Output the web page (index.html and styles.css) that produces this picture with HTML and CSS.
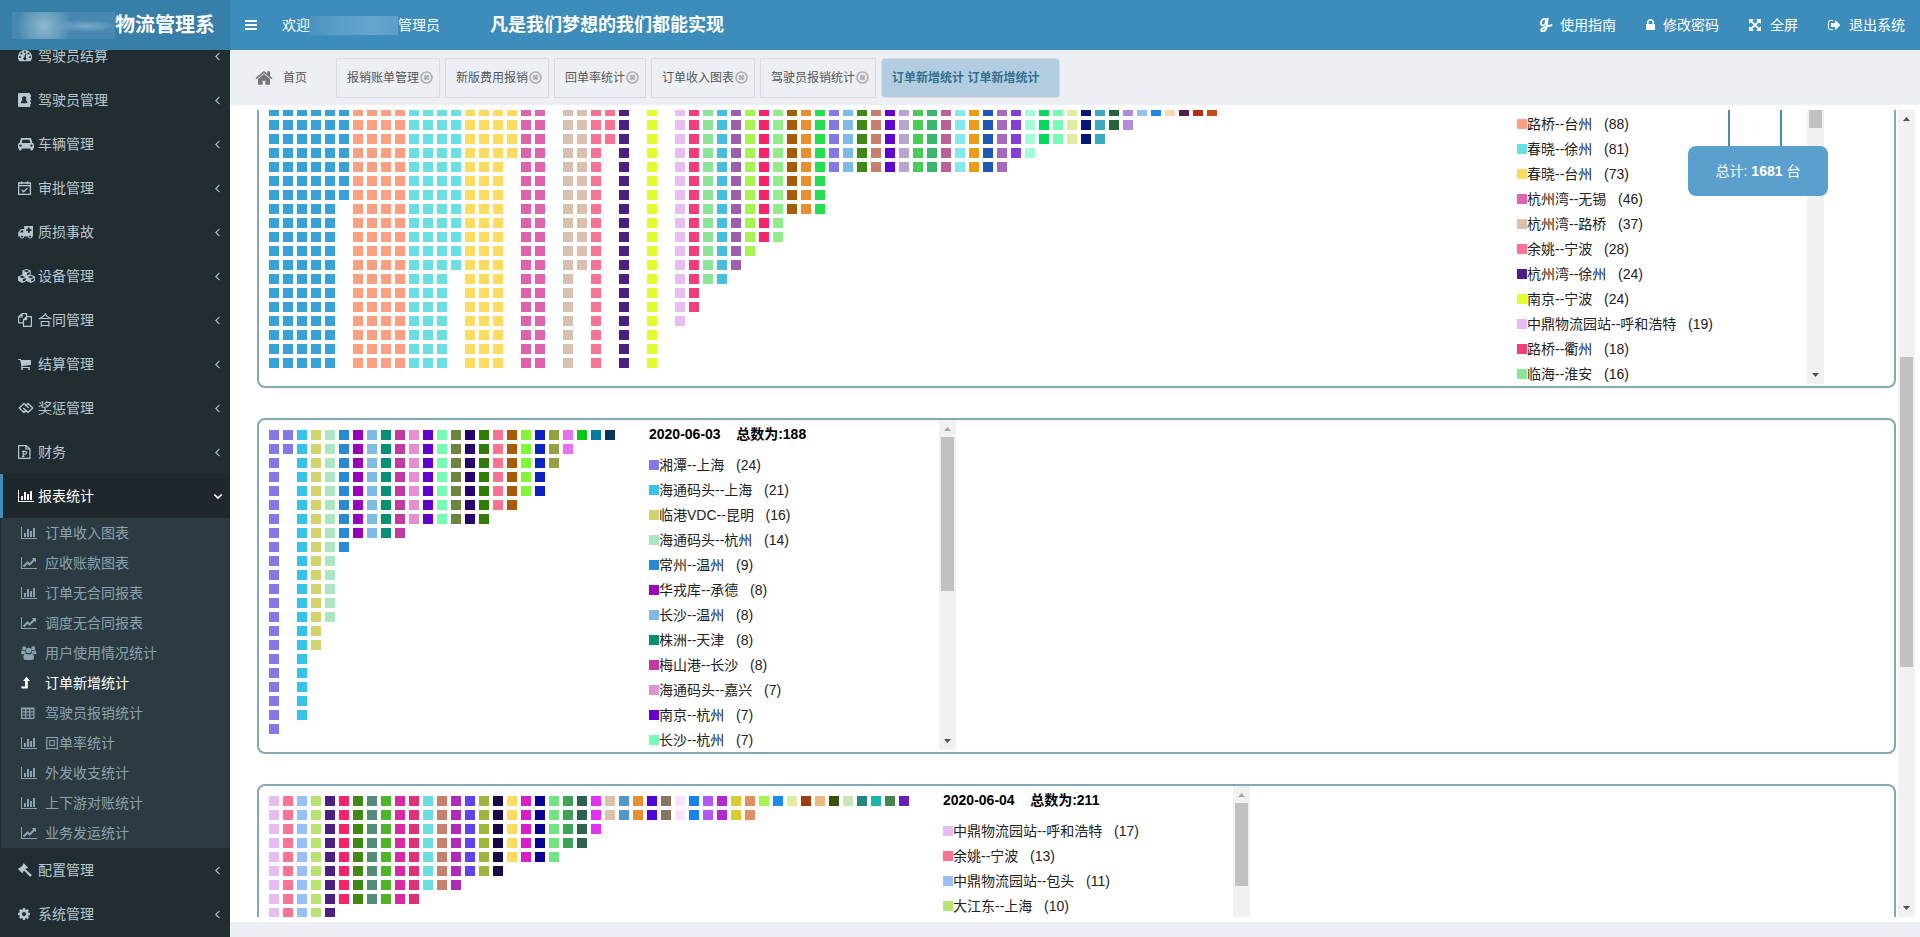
FILE: index.html
```html
<!DOCTYPE html>
<html lang="zh-CN">
<head>
<meta charset="utf-8">
<title>物流管理系统</title>
<link rel="stylesheet" href="styles.css">
</head>
<body>
<svg class="sprite" aria-hidden="true">
  <symbol id="i-bars" viewBox="128 0 1536 1792" preserveAspectRatio="xMinYMid"><path d="M1664 1344v128q0 26-19 45t-45 19h-1408q-26 0-45-19t-19-45v-128q0-26 19-45t45-19h1408q26 0 45 19t19 45zm0-512v128q0 26-19 45t-45 19h-1408q-26 0-45-19t-19-45v-128q0-26 19-45t45-19h1408q26 0 45 19t19 45zm0-512v128q0 26-19 45t-45 19h-1408q-26 0-45-19t-19-45v-128q0-26 19-45t45-19h1408q26 0 45 19t19 45z"/></symbol>
  <symbol id="i-left" viewBox="600 0 640 1792"><path d="M1203 544q0 13-10 23l-393 393 393 393q10 10 10 23t-10 23l-50 50q-10 10-23 10t-23-10l-466-466q-10-10-10-23t10-23l466-466q10-10 23-10t23 10l50 50q10 10 10 23z"/></symbol>
  <symbol id="i-down" viewBox="0 0 10 14"><path d="M1.300 5.500L5 9l3.700-3.500" fill="none" stroke="currentColor" stroke-width="1.700"/></symbol>
  <symbol id="i-bar" viewBox="0 0 2048 1792" preserveAspectRatio="xMinYMid"><path d="M640 896v512h-256v-512h256zm384-512v1024h-256v-1024h256zm1024 1152v128h-2048v-1536h128v1408h1920zm-640-896v768h-256v-768h256zm384-384v1152h-256v-1152h256z"/></symbol>
  <symbol id="i-line" viewBox="0 0 2048 1792" preserveAspectRatio="xMinYMid"><path d="M2048 1536v128h-2048v-1536h128v1408h1920zm-128-1248v435q0 21-19.500 29.500t-35.500-7.500l-121-121-633 633q-10 10-23 10t-23-10l-233-233-416 416-192-192 585-585q10-10 23-10t23 10l233 233 464-464-121-121q-16-16-7.500-35.500t29.500-19.500h435q14 0 23 9t9 23z"/></symbol>
  <symbol id="i-home" viewBox="64 128 1664 1536"><path d="M1472 992v480q0 26-19 45t-45 19h-384v-384h-256v384h-384q-26 0-45-19t-19-45v-480q0-1 .5-3t.5-3l575-474 575 474q1 2 1 6zm223-69l-62 74q-8 9-21 11h-3q-13 0-21-7l-692-577-692 577q-12 8-24 7-13-2-21-11l-62-74q-8-10-7-23.500t11-21.500l719-599q32-26 76-26t76 26l244 204v-195q0-14 9-23t23-9h192q14 0 23 9t9 23v408l219 182q10 8 11 21.500t-7 23.500z"/></symbol>
  <symbol id="i-lock" viewBox="320 0 1152 1792" preserveAspectRatio="xMinYMid"><path d="M640 768h512v-192q0-106-75-181t-181-75-181 75-75 181v192zm832 96v576q0 40-28 68t-68 28h-960q-40 0-68-28t-28-68v-576q0-40 28-68t68-28h32v-192q0-184 132-316t316-132 316 132 132 316v192h32q40 0 68 28t28 68z"/></symbol>
  <symbol id="i-cog" viewBox="128 0 1664 1792" preserveAspectRatio="xMinYMid"><path d="M1152 896q0-106-75-181t-181-75-181 75-75 181 75 181 181 75 181-75 75-181zm512-109v222q0 12-8 23t-20 13l-185 28q-19 54-39 91 35 50 107 138 10 12 10 25t-9 23q-27 37-99 108t-94 71q-12 0-26-9l-138-108q-44 23-91 38-16 136-29 186-7 28-36 28h-222q-14 0-24.500-8.500t-11.500-21.500l-28-184q-49-16-90-37l-141 107q-10 9-25 9-14 0-25-11-126-114-165-168-7-10-7-23 0-12 8-23 15-21 51-66.500t54-70.500q-27-50-41-99l-183-27q-13-2-21-12.500t-8-23.500v-222q0-12 8-23t19-13l186-28q14-46 39-92-40-57-107-138-10-12-10-24 0-10 9-23 26-36 98.500-107.500t94.500-71.500q13 0 26 10l138 107q44-23 91-38 16-136 29-186 7-28 36-28h222q14 0 24.500 8.500t11.500 21.500l28 184q49 16 90 37l142-107q9-9 24-9 13 0 25 10 129 119 165 170 7 8 7 22 0 12-8 23-15 21-51 66.500t-54 70.500q26 50 41 98l183 28q13 2 21 12.500t8 23.500z"/></symbol>
  <symbol id="i-cart" viewBox="64 0 1728 1792" preserveAspectRatio="xMinYMid"><path d="M704 1536q0 52-38 90t-90 38-90-38-38-90 38-90 90-38 90 38 38 90zm896 0q0 52-38 90t-90 38-90-38-38-90 38-90 90-38 90 38 38 90zm128-1088v512q0 24-16.500 42.500t-40.500 21.500l-1044 122q13 60 13 70 0 16-24 64h920q26 0 45 19t19 45-19 45-45 19h-1024q-26 0-45-19t-19-45q0-11 8-31.500t16-36 21.500-40 15.500-29.500l-177-823h-204q-26 0-45-19t-19-45 19-45 45-19h256q16 0 28.500 6.500t19.500 15.500 13 24.500 8 26 5.500 29.500 4.500 26h1201q26 0 45 19t19 45z"/></symbol>
  <symbol id="i-out" viewBox="64 0 1664 1792" preserveAspectRatio="xMinYMid"><path d="M704 1440q0 4 1 20t.5 26.500-3 23.500-10 19.500-20.500 6.500h-320q-119 0-203.500-84.500t-84.500-203.500v-704q0-119 84.500-203.500t203.500-84.500h320q13 0 22.500 9.500t9.500 22.500q0 4 1 20t.5 26.500-3 23.500-10 19.500-20.500 6.500h-320q-66 0-113 47t-47 113v704q0 66 47 113t113 47h312l11.500 1 11.500 3 8 5.500 7 9 2 13.500zm928-544q0 26-19 45l-544 544q-19 19-45 19t-45-19-19-45v-288h-448q-26 0-45-19t-19-45v-384q0-26 19-45t45-19h448v-288q0-26 19-45t45-19 45 19l544 544q19 19 19 45z"/></symbol>
  <symbol id="i-full" viewBox="128 0 1664 1792" preserveAspectRatio="xMinYMid"><path d="M1411 541l-355 355 355 355 144-144q29-31 70-14 39 17 39 59v448q0 26-19 45t-45 19h-448q-42 0-59-40-17-39 14-69l144-144-355-355-355 355 144 144q31 30 14 69-17 40-59 40h-448q-26 0-45-19t-19-45v-448q0-42 40-59 39-17 69 14l144 144 355-355-355-355-144 144q-19 19-45 19-12 0-24-5-40-17-40-59v-448q0-26 19-45t45-19h448q42 0 59 40 17 39-14 69l-144 144 355 355 355-355-144-144q-31-30-14-69 17-40 59-40h448q26 0 45 19t19 45v448q0 42-39 59-13 5-25 5-26 0-45-19z"/></symbol>
  <symbol id="i-glide" viewBox="0 0 14 14" preserveAspectRatio="xMinYMid"><path d="M6.800 1C3.800.200 1.500 3.200 2 5.800 2.400 8 5.200 8 6.300 5.500 7 3.800 7.300 2.500 6.800 1z" fill="none" stroke="currentColor" stroke-width="1.800"/><path d="M8.800.6C7.500 4 8 8 7 10.800 6.200 13.200 3.500 14 2.500 12.700 1.700 11.500 3.500 10 6 9.200 8 8.400 9.500 7.400 12.500 7.200" fill="none" stroke="currentColor" stroke-width="2" stroke-linecap="round"/></symbol>
  <symbol id="i-gauge" viewBox="0 0 16 14" preserveAspectRatio="xMinYMid"><path fill-rule="evenodd" d="M7 1a7 7 0 0 1 5.900 10.800c-.2.300-.4.400-.800.400H1.900c-.4 0-.6-.1-.800-.4A7 7 0 0 1 7 1zM2 7a1 1 0 1 0 0 2 1 1 0 0 0 0-2zm1.500-3.500a1 1 0 1 0 0 2 1 1 0 0 0 0-2zM7 2a1 1 0 1 0 0 2 1 1 0 0 0 0-2zm3.500 1.500a1 1 0 1 0 0 2 1 1 0 0 0 0-2zM12 7a1 1 0 1 0 0 2 1 1 0 0 0 0-2zM7.300 4.500l-.800 3.600a1.500 1.500 0 1 0 1.200.2L8.400 4.700z"/></symbol>
  <symbol id="i-book" viewBox="0 0 16 14" preserveAspectRatio="xMinYMid"><path fill-rule="evenodd" d="M1.200 0h10c.7 0 1.100.5 1.100 1.100V2h.700v2h-.700v1.500h.700v2h-.700V9h.700v2h-.700v1.900c0 .6-.4 1.100-1.100 1.100h-10C.5 14 0 13.500 0 12.900V1.100C0 .5.500 0 1.200 0zm5 3.300a2.200 2.200 0 0 0-1.400 3.900C3.500 7.500 3 8.500 3 10.200h6.400c0-1.700-.5-2.700-1.800-3A2.200 2.200 0 0 0 6.200 3.300z"/></symbol>
  <symbol id="i-car" viewBox="0 0 16 14" preserveAspectRatio="xMinYMid"><path fill-rule="evenodd" d="M4.200 1h7.600c.8 0 1.400.5 1.600 1.200L14.300 6c1 0 1.700.700 1.700 1.700v3.800h-1V12.200c0 1.800-2.600 1.800-2.600 0v-.7H3.600v.7c0 1.800-2.600 1.800-2.600 0v-.7H0V7.700C0 6.700.700 6 1.700 6l.9-3.800C2.800 1.500 3.400 1 4.200 1zm.3 1.700L3.700 6h8.600l-.800-3.300zM2.500 7.400a1.200 1.200 0 1 0 0 2.400 1.200 1.200 0 0 0 0-2.400zm11 0a1.200 1.200 0 1 0 0 2.400 1.200 1.200 0 0 0 0-2.400z"/></symbol>
  <symbol id="i-cal" viewBox="0 0 16 14" preserveAspectRatio="xMinYMid"><path d="M.6 2h11.800v11.400H.6zM.6 4.600h11.800M3.500.2v3M9.500.2v3M3.700 8.800l2 2 3.700-3.700" fill="none" stroke="currentColor" stroke-width="1.300"/></symbol>
  <symbol id="i-amb" viewBox="0 0 16 14" preserveAspectRatio="xMinYMid"><path fill-rule="evenodd" d="M6.200 1H15v10.500h-.9a2 2 0 0 1-4 0H6a2 2 0 0 1-4 0H.300V7.200L3 4h3.200zM3.600 5.200L1.700 7.500h3.500V5.200zM9.900 2.500v1.700H8.200v1.900h1.700v1.700h1.900V6.100h1.700V4.200h-1.700V2.500zM4 10.500a1 1 0 1 0 0 2 1 1 0 0 0 0-2zm8.100 0a1 1 0 1 0 0 2 1 1 0 0 0 0-2z"/></symbol>
  <symbol id="i-cubes" viewBox="0 0 17 14" preserveAspectRatio="xMinYMid"><path fill-rule="evenodd" d="M8.500 0l4.200 1.600v4.200L17 7.600v4.200L12.800 14l-4.300-2L4.200 14 0 11.800V7.600l4.300-1.800V1.600zM8.500 1L5.600 2.100l2.900 1.200 2.900-1.200zM11.800 3L9 4.200v2.200l2.800-1.200zM4.200 6.800L1.400 8l2.800 1.200L7 8zm8.600 0L10 8l2.800 1.200L15.600 8zM7.800 9L4.800 10.300v2.300l3-1.400zm8.200 0l-2.800 1.300v2.300L16 11.200z"/></symbol>
  <symbol id="i-copy" viewBox="0 0 16 14" preserveAspectRatio="xMinYMid"><path d="M5.500 9.800H.6V4L4 .6h4.600v3M4 .6V4H.6M8.500 3.600h4.900v9.800H5.500V6.600zM8.500 3.600v3h-3" fill="none" stroke="currentColor" stroke-width="1.200" stroke-linejoin="round"/></symbol>
  <symbol id="i-shake" viewBox="0 0 16 14" preserveAspectRatio="xMinYMid"><path d="M8.200 9.300L6 11.500 1.300 7 6 2.500 10.300 6.600M7.800 4.700L10 2.500 14.700 7 10 11.500 5.700 7.400" fill="none" stroke="currentColor" stroke-width="1.400" stroke-linejoin="round" stroke-linecap="round"/></symbol>
  <symbol id="i-ppt" viewBox="0 0 16 14" preserveAspectRatio="xMinYMid"><path d="M.6.600h7.600L11.900 4v9.400H.600zM8 .600V4h3.900M4 11.300h2.400M4 6.300h2.600q2 0 2 1.500t-2 1.500H5.200M5.200 6.300v5" fill="none" stroke="currentColor" stroke-width="1.200"/></symbol>
  <symbol id="i-users" viewBox="0 0 16 14" preserveAspectRatio="xMinYMid"><path d="M3.200.3a2 2 0 1 1 0 4 2 2 0 0 1 0-4zM12.200.3a2 2 0 1 1 0 4 2 2 0 0 1 0-4zM7.700 1.700a2.800 2.800 0 1 1 0 5.600 2.800 2.800 0 0 1 0-5.600zM1 4.200q2 1 3.300.6Q4.200 6.300 5 7.200q-1.500 0-2.400 1.100H1.300Q0 8.300 0 7.200 0 5 1 4.200zM14.400 4.200q-2 1-3.300.6.100 1.500-.7 2.400 1.500 0 2.400 1.100h1.300q1.300 0 1.300-1.100 0-2.200-1-3zM4.600 7.500q3.100 2 6.200 0 2.200.400 2.200 4.200 0 2.300-2 2.300H4.400q-2 0-2-2.300 0-3.800 2.200-4.200z"/></symbol>
  <symbol id="i-up" viewBox="0 0 16 14" preserveAspectRatio="xMinYMid"><path d="M5.500.8L9 5H6.800v7.500H.8L0 10.500h4V5H2z"/></symbol>
  <symbol id="i-table" viewBox="0 0 16 14" preserveAspectRatio="xMinYMid"><path d="M.600 2h12.300v10.300H.600zM.600 3H13M.600 5.800H13M.600 9H13M4.700 2.500v9.800M8.800 2.500v9.800" fill="none" stroke="currentColor" stroke-width="1.200"/></symbol>
  <symbol id="i-gavel" viewBox="0 0 16 14" preserveAspectRatio="xMinYMid"><path d="M5.800.3l4.200 4.200-1 1-.6-.2L5 8.700l.2.600-1 1L0 6.100l1-1 .6.200L5 1.900l-.2-.6zM7.500 6.200l5.800 5.300c1 1-.9 2.800-1.900 1.800L6.100 7.600z"/></symbol>
  <symbol id="i-close" viewBox="0 0 13 13"><path d="M4.300 4.300l4.400 4.400M8.700 4.300L4.300 8.700" fill="none" stroke="currentColor" stroke-width="2.600"/><circle cx="6.500" cy="6.500" r="5.500" fill="none" stroke="currentColor" stroke-width="1.700"/></symbol>
  <symbol id="i-arrow" viewBox="0 0 17 17"><path d="M5 11h7L8.500 7z"/></symbol>
</svg>

<header class="topbar">
  <div class="brand"><span class="brand-mask"></span>物流管理系</div>
  <button class="toggle" type="button" aria-label="切换菜单"><svg class="icon"><use href="#i-bars"/></svg></button>
  <div class="welcome">欢迎<span class="name-mask"></span>管理员</div>
  <div class="slogan">凡是我们梦想的我们都能实现</div>
  <nav class="tools">
    <a href="#"><svg class="icon"><use href="#i-glide"/></svg>使用指南</a>
    <a href="#"><svg class="icon narrow"><use href="#i-lock"/></svg>修改密码</a>
    <a href="#"><svg class="icon"><use href="#i-full"/></svg>全屏</a>
    <a href="#"><svg class="icon"><use href="#i-out"/></svg>退出系统</a>
  </nav>
</header>

<div class="shell">
  <aside class="sidebar" id="sidebar">
    <nav class="menu">
      <a class="item" href="#"><svg class="icon"><use href="#i-gauge"/></svg>驾驶员结算<svg class="caret"><use href="#i-left"/></svg></a>
      <a class="item" href="#"><svg class="icon"><use href="#i-book"/></svg>驾驶员管理<svg class="caret"><use href="#i-left"/></svg></a>
      <a class="item" href="#"><svg class="icon"><use href="#i-car"/></svg>车辆管理<svg class="caret"><use href="#i-left"/></svg></a>
      <a class="item" href="#"><svg class="icon"><use href="#i-cal"/></svg>审批管理<svg class="caret"><use href="#i-left"/></svg></a>
      <a class="item" href="#"><svg class="icon"><use href="#i-amb"/></svg>质损事故<svg class="caret"><use href="#i-left"/></svg></a>
      <a class="item" href="#"><svg class="icon"><use href="#i-cubes"/></svg>设备管理<svg class="caret"><use href="#i-left"/></svg></a>
      <a class="item" href="#"><svg class="icon"><use href="#i-copy"/></svg>合同管理<svg class="caret"><use href="#i-left"/></svg></a>
      <a class="item" href="#"><svg class="icon"><use href="#i-cart"/></svg>结算管理<svg class="caret"><use href="#i-left"/></svg></a>
      <a class="item" href="#"><svg class="icon"><use href="#i-shake"/></svg>奖惩管理<svg class="caret"><use href="#i-left"/></svg></a>
      <a class="item" href="#"><svg class="icon"><use href="#i-ppt"/></svg>财务<svg class="caret"><use href="#i-left"/></svg></a>
      <a class="item open" href="#"><svg class="icon"><use href="#i-bar"/></svg>报表统计<svg class="caret"><use href="#i-down"/></svg></a>
      <div class="submenu">
        <a href="#"><svg class="icon"><use href="#i-bar"/></svg>订单收入图表</a>
        <a href="#"><svg class="icon"><use href="#i-line"/></svg>应收账款图表</a>
        <a href="#"><svg class="icon"><use href="#i-bar"/></svg>订单无合同报表</a>
        <a href="#"><svg class="icon"><use href="#i-line"/></svg>调度无合同报表</a>
        <a href="#"><svg class="icon"><use href="#i-users"/></svg>用户使用情况统计</a>
        <a class="current" href="#"><svg class="icon"><use href="#i-up"/></svg>订单新增统计</a>
        <a href="#"><svg class="icon"><use href="#i-table"/></svg>驾驶员报销统计</a>
        <a href="#"><svg class="icon"><use href="#i-bar"/></svg>回单率统计</a>
        <a href="#"><svg class="icon"><use href="#i-bar"/></svg>外发收支统计</a>
        <a href="#"><svg class="icon"><use href="#i-bar"/></svg>上下游对账统计</a>
        <a href="#"><svg class="icon"><use href="#i-line"/></svg>业务发运统计</a>
      </div>
      <a class="item" href="#"><svg class="icon"><use href="#i-gavel"/></svg>配置管理<svg class="caret"><use href="#i-left"/></svg></a>
      <a class="item" href="#"><svg class="icon"><use href="#i-cog"/></svg>系统管理<svg class="caret"><use href="#i-left"/></svg></a>
    </nav>
  </aside>

  <div class="workspace">
    <nav class="tabs">
      <a class="home" href="#"><svg><use href="#i-home"/></svg>首页</a>
      <div class="tab"><a href="#">报销账单管理</a><button type="button" aria-label="关闭"><svg><use href="#i-close"/></svg></button></div>
      <div class="tab"><a href="#">新版费用报销</a><button type="button" aria-label="关闭"><svg><use href="#i-close"/></svg></button></div>
      <div class="tab"><a href="#">回单率统计</a><button type="button" aria-label="关闭"><svg><use href="#i-close"/></svg></button></div>
      <div class="tab"><a href="#">订单收入图表</a><button type="button" aria-label="关闭"><svg><use href="#i-close"/></svg></button></div>
      <div class="tab"><a href="#">驾驶员报销统计</a><button type="button" aria-label="关闭"><svg><use href="#i-close"/></svg></button></div>
      <div class="tab active"><a href="#">订单新增统计 订单新增统计</a></div>
    </nav>
    <main class="panel">
      <div class="days" id="days"></div>
      <div class="scrollbar page-bar"><svg><use href="#i-arrow"/></svg><div class="track"><div class="thumb"></div></div><svg class="flip"><use href="#i-arrow"/></svg></div>
      <div class="total"><div class="ropes"></div><div class="sign">总计: <b>1681</b> 台</div></div>
    </main>
  </div>
</div>
<script src="app.js"></script>
</body>
</html>
```

FILE: styles.css
```css
* { box-sizing: border-box; }
body {
  margin: 0;
  height: 100vh;
  display: flex;
  flex-direction: column;
  overflow: hidden;
  background: #ecf0f5;
  font: 14px/20px "Liberation Sans", "Noto Sans CJK SC", sans-serif;
  color: #000;
}
a { color: inherit; text-decoration: none; }
button { padding: 0; border: 0; background: none; color: inherit; font: inherit; }
svg { fill: currentColor; display: block; flex: none; }
.sprite { position: absolute; width: 0; height: 0; }
.icon { width: 17px; height: 14px; }

/* top bar */
.topbar {
  flex: none;
  display: flex;
  align-items: center;
  height: 50px;
  background: #3c8dbc;
  color: #fff;
}
.brand {
  flex: none;
  display: flex;
  align-items: center;
  width: 230px;
  height: 50px;
  padding-left: 12px;
  background: #367fa9;
  font-size: 20px;
  font-weight: bold;
  white-space: nowrap;
}
.brand-mask {
  width: 103px;
  height: 27px;
  background:
    radial-gradient(circle at 32px 14px, #8fb8d0, transparent 28px),
    radial-gradient(ellipse at 74px 14px, #7babc7, transparent 32px),
    #4688af;
}
.toggle { margin: 0 23px 0 15px; }
.toggle .icon { width: 14px; }
.welcome { display: flex; align-items: center; white-space: nowrap; }
.name-mask {
  width: 88px;
  height: 19px;
  background: linear-gradient(90deg, #4a94c1, #5a9fc9 35%, #66a5cc 70%, #5c9fc9);
}
.slogan { margin-left: 50px; font-size: 18px; font-weight: bold; white-space: nowrap; }
.tools { display: flex; margin-left: auto; }
.tools a { display: flex; align-items: center; padding: 0 15px; }
.tools .icon { width: 14px; margin-right: 7px; }
.tools .narrow { width: 10px; }

.shell { flex: 1; display: flex; min-height: 0; }

/* side menu */
.sidebar {
  flex: none;
  width: 230px;
  overflow-y: auto;
  scrollbar-width: none;
  background: #222d32;
  color: #b8c7ce;
}
.menu { padding-bottom: 20px; }
.item {
  display: flex;
  align-items: center;
  height: 44px;
  padding: 0 10px 0 15px;
  border-left: 3px solid transparent;
}
.item .icon { margin-right: 3px; }
.caret { width: 5px; height: 14px; margin-left: auto; }
.open { background: #1e282c; border-left-color: #3c8dbc; color: #fff; }
.open .caret { width: 10px; margin-right: -3px; }
.submenu { margin-left: 1px; background: #2c3b41; color: #8aa4af; }
.submenu a { display: flex; align-items: center; height: 30px; padding-left: 20px; }
.submenu .icon { margin-right: 7px; }
.submenu .current { color: #fff; }

/* page tabs */
.workspace { flex: 1; display: flex; flex-direction: column; min-width: 0; }
.tabs {
  display: flex;
  align-items: center;
  gap: 5px;
  height: 55px;
  padding: 0 25px;
  font-size: 12px;
  color: #555;
  white-space: nowrap;
}
.home { display: flex; align-items: center; gap: 10px; margin-right: 24px; }
.home svg { width: 18px; height: 16px; color: #777; }
.tab {
  display: flex;
  align-items: center;
  gap: 1px;
  height: 40px;
  padding: 0 6px 0 10px;
  border: 1px solid #ddd;
}
.tab button { color: #b5afaf; }
.tab svg { width: 13px; height: 13px; }
.active {
  padding-right: 20px;
  border-radius: 4px;
  background: #b2cde0;
  color: #31708f;
  font-weight: bold;
}

/* daily charts */
.panel {
  position: relative;
  flex: 1;
  display: flex;
  min-height: 0;
  margin-bottom: 15px;
  padding: 5px;
  background: #fff;
}
.days {
  flex: 1;
  min-width: 0;
  overflow-y: auto;
  scrollbar-width: none;
  padding: 0 2px 0 22px;
}
.day {
  display: flex;
  margin-bottom: 30px;
  padding-bottom: 2px;
  border: 2px solid #82a9b5;
  border-radius: 8px;
}
.chart { display: flex; gap: 4px; padding: 10px 0 0 10px; }
.route {
  display: grid;
  grid-auto-flow: column;
  grid-template-rows: repeat(22, 10px);
  grid-auto-columns: 10px;
  gap: 4px;
}
.route i { background: currentColor; }
.legend { display: flex; width: 307px; height: 330px; margin-left: 34px; }
.entries { flex: 1; overflow-y: auto; scrollbar-width: none; white-space: pre; }
.entries h2 { height: 33px; margin: 0; padding-top: 4px; font-size: 14px; font-weight: bold; }
.entries ul { margin: 0; padding: 0; list-style: none; color: #222; }
.entries li { display: flex; align-items: center; height: 24px; margin-bottom: 1px; }
.entries i { width: 10px; height: 10px; }

.scrollbar {
  flex: none;
  display: flex;
  flex-direction: column;
  width: 17px;
  background: #f1f1f1;
  color: #505050;
}
.scrollbar svg { width: 17px; height: 17px; }
.legend .scrollbar svg:first-child { color: #a3a3a3; }
.scrollbar .flip { transform: rotate(180deg); }
.track { flex: 1; padding: 0 2px; }
.thumb { background: #c1c1c1; }
.page-bar .track { display: flex; align-items: flex-start; padding-top: 230px; }
.page-bar .thumb { flex: 1; height: 310px; }

/* hanging total sign */
.total { position: absolute; top: 5px; right: 92px; width: 140px; color: #fff; }
.ropes { width: 54px; height: 36px; margin: 0 auto 0 40px; border: solid #4b8aac; border-width: 0 2px; }
.sign {
  height: 50px;
  border-radius: 8px;
  background: #5a9fcd;
  line-height: 50px;
  text-align: center;
}
```

FILE: app.js
```js
// Each route is [colour, order count, name].
const days = [
  { date: '2020-06-02', routes: [
    ['#36a2da', 120], ['#ff9f7f', 88, '路桥--台州'], ['#67e0e3', 81, '春晓--徐州'], ['#ffdb5c', 73, '春晓--台州'],
    ['#e062ae', 46, '杭州湾--无锡'], ['#dbc0ae', 37, '杭州湾--路桥'], ['#fd7293', 28, '余姚--宁波'],
    ['#4d1f86', 24, '杭州湾--徐州'], ['#e3fd2a', 24, '南京--宁波'], ['#e7bcf3', 19, '中鼎物流园站--呼和浩特'],
    ['#f43c7c', 18, '路桥--衢州'], ['#89e697', 16, '临海--淮安'], ['#46c0e2', 16], ['#9d5fad', 15], ['#a5f54e', 14],
    ['#fe2068', 13], ['#8eee87', 13], ['#a85b00', 11], ['#ec8e2b', 11], ['#21e04e', 11],
    ['#8378ea', 8], ['#7bbde8', 8], ['#3f8a10', 8], ['#c8806c', 8], ['#6200d6', 8], ['#b9a4cf', 8], ['#45cd55', 8],
    ['#37b96b', 8], ['#bc5f95', 8], ['#82eaec', 8], ['#ec9b12', 8], ['#1d55bd', 8], ['#a768c0', 8],
    ['#833ddb', 7], ['#9fffd5', 7], ['#00db5b', 6], ['#73ffb3', 6], ['#e0eba0', 6], ['#04167d', 6], ['#39abc0', 6],
    ['#25633a', 5], ['#b28adb', 5], ['#96bfff', 4], ['#1b89f2', 4], ['#fbd8b2', 4], ['#54203f', 4], ['#b62e1b', 4], ['#c94c16', 4],
    ['#36a2da', 3], ['#ff9f7f', 3], ['#67e0e3', 3], ['#ffdb5c', 3], ['#e062ae', 3], ['#dbc0ae', 3],
    ['#fd7293', 2], ['#4d1f86', 2], ['#e3fd2a', 2], ['#e7bcf3', 2], ['#f43c7c', 2], ['#89e697', 2],
    ['#46c0e2', 1], ['#9d5fad', 1], ['#a5f54e', 1], ['#fe2068', 1], ['#8eee87', 1], ['#a85b00', 1], ['#ec8e2b', 1]
  ] },
  { date: '2020-06-03', routes: [
    ['#8378ea', 24, '湘潭--上海'], ['#32c5e9', 21, '海通码头--上海'], ['#d2d46a', 16, '临港VDC--昆明'],
    ['#a7e8c3', 14, '海通码头--杭州'], ['#258bd6', 9, '常州--温州'], ['#9a00bd', 8, '华戎库--承德'],
    ['#7bbde8', 8, '长沙--温州'], ['#029173', 8, '株洲--天津'], ['#c637a6', 8, '梅山港--长沙'],
    ['#e690d1', 7, '海通码头--嘉兴'], ['#6200d6', 7, '南京--杭州'], ['#73ffb3', 7, '长沙--杭州'],
    ['#6f843d', 7], ['#260070', 7], ['#2f7d02', 7], ['#fd7293', 6], ['#a85b00', 6], ['#7ff832', 5], ['#0b22c9', 5],
    ['#92a33e', 3], ['#e96fee', 2], ['#06c914', 1], ['#007ba3', 1], ['#0a345c', 1]
  ] },
  { date: '2020-06-04', routes: [
    ['#e7bcf3', 17, '中鼎物流园站--呼和浩特'], ['#fd7293', 13, '余姚--宁波'], ['#96bfff', 11, '中鼎物流园站--包头'],
    ['#b9e56e', 10, '大江东--上海'], ['#4d1f86', 9], ['#fe2068', 8], ['#3f8a10', 8], ['#528d79', 8], ['#50b427', 8],
    ['#dd27a4', 8], ['#e22f75', 8], ['#67e0e3', 7], ['#c8806c', 7], ['#b329be', 7], ['#6141f0', 6], ['#9db635', 6],
    ['#1b0648', 6], ['#ffdb5c', 5], ['#dc1cc8', 5], ['#0a0099', 5], ['#72e583', 5], ['#3ba355', 4], ['#2c624f', 4],
    ['#e62df9', 3], ['#dbc0ae', 2], ['#4e97d1', 2], ['#ec8e2b', 2], ['#5000dc', 2], ['#86765c', 2], ['#f9e2fd', 2],
    ['#1283f5', 2], ['#b554fa', 2], ['#b329ce', 2], ['#dec92f', 2], ['#e48f61', 2],
    ['#a5f54e', 1], ['#1b89f2', 1], ['#e0eba0', 1], ['#a03c0d', 1], ['#efb77c', 1], ['#36510b', 1], ['#c8e6b9', 1],
    ['#22877f', 1], ['#18b7a9', 1], ['#43864f', 1], ['#641fba', 1]
  ] }
];

const bar = '<div class="scrollbar"><svg><use href="#i-arrow"/></svg><div class="track"><div class="thumb"></div></div>' +
  '<svg class="flip"><use href="#i-arrow"/></svg></div>';
const host = document.getElementById('days');

host.innerHTML = days.map(({ date, routes }) => {
  const sum = routes.reduce((n, r) => n + r[1], 0);
  const chart = routes.map(([c, n]) => `<div class="route" style="color:${c}">${'<i></i>'.repeat(n)}</div>`).join('');
  const items = routes.map(([c, n, name = '其他线路']) =>
    `<li><i style="background:${c}"></i>${name}   (${n})</li>`).join('');
  return `<section class="day"><div class="chart">${chart}</div><div class="legend">` +
    `<div class="entries"><h2>${date}    总数为:${sum}</h2><ul>${items}</ul></div>${bar}</div></section>`;
}).join('');

document.querySelectorAll('.legend').forEach(legend => {
  const list = legend.querySelector('.entries');
  const track = legend.querySelector('.track');
  const thumb = legend.querySelector('.thumb');
  const ratio = track.clientHeight / list.scrollHeight;
  const sync = () => {
    thumb.style.height = Math.round(list.clientHeight * ratio) + 'px';
    thumb.style.transform = `translateY(${Math.round(list.scrollTop * ratio)}px)`;
  };
  list.addEventListener('scroll', sync);
  sync();
});

host.scrollTop = 58;
document.getElementById('sidebar').scrollTop = 16;
```
